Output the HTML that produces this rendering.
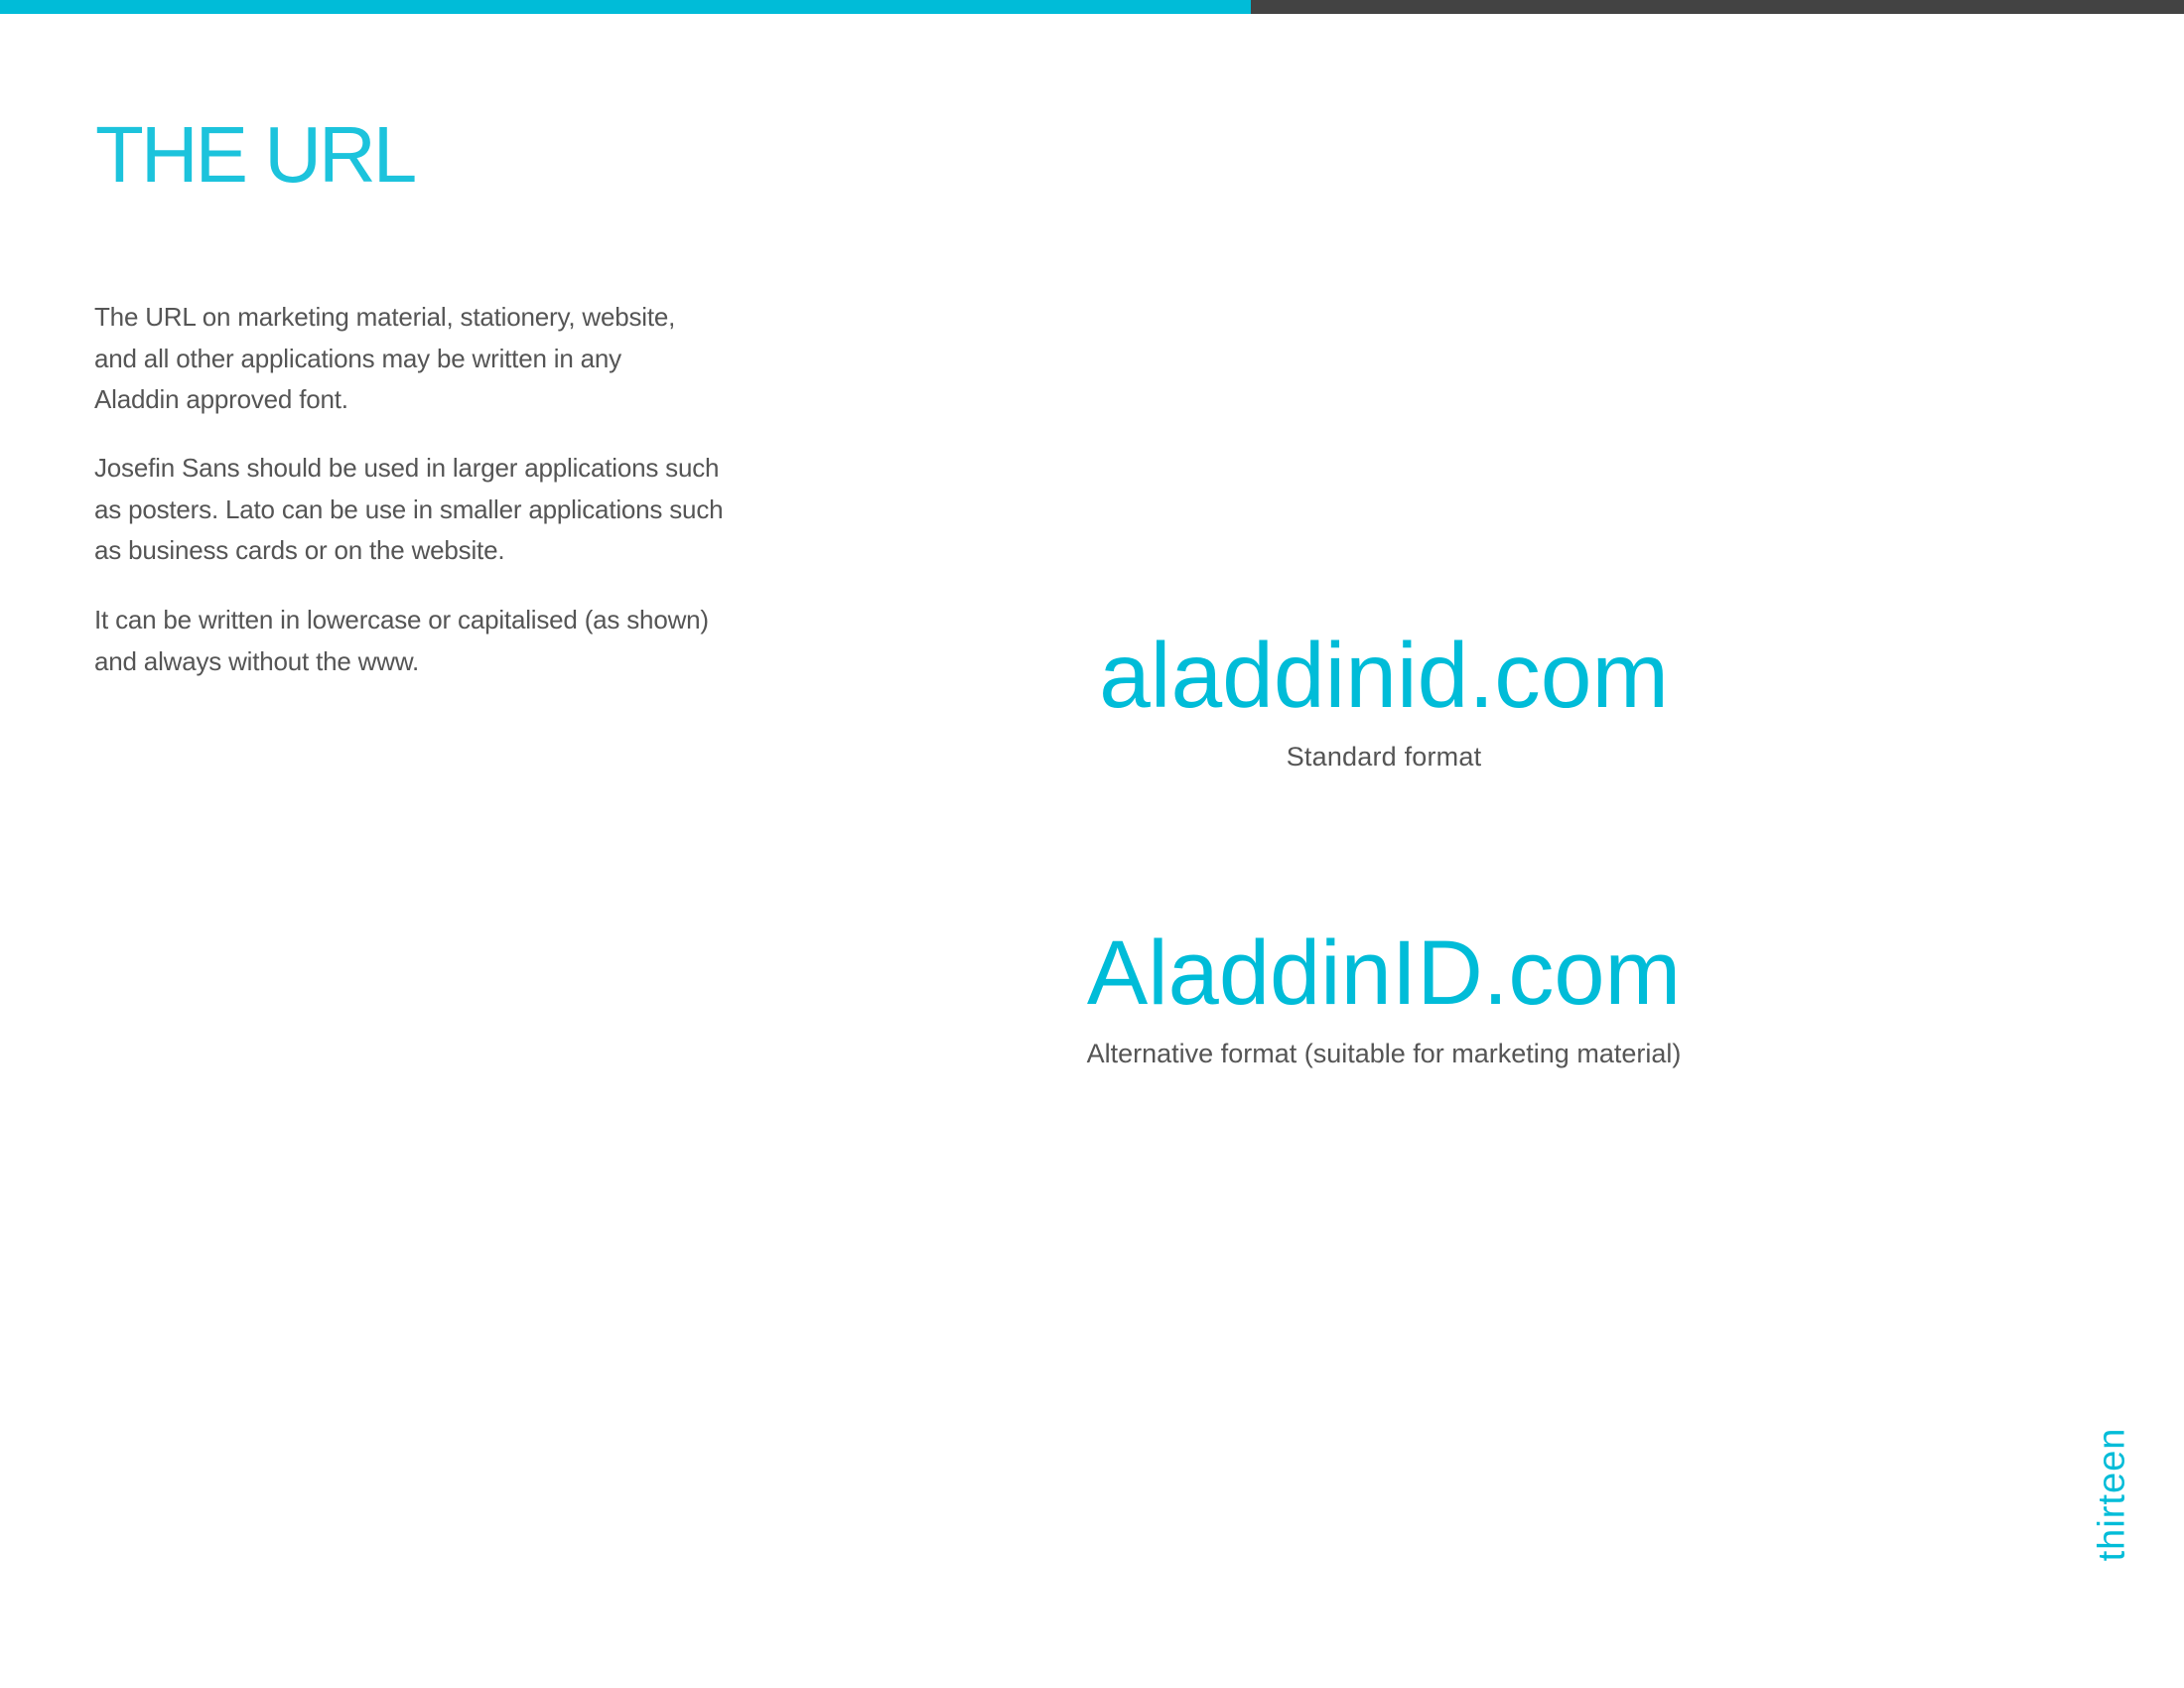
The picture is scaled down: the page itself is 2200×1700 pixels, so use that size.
<!DOCTYPE html>
<html><head><meta charset="utf-8"><style>
html,body{margin:0;padding:0;background:#fff;}
body{width:2200px;height:1700px;position:relative;overflow:hidden;font-family:"Liberation Sans",sans-serif;}
.bar1{position:absolute;left:0;top:0;width:1260px;height:14px;background:#00bcd8;}
.bar2{position:absolute;left:1260px;top:0;width:940px;height:14px;background:#434343;}
.t{position:absolute;left:96px;top:106px;font-size:80px;line-height:100px;color:#1cc3dc;letter-spacing:-3px;font-weight:normal;}
.p{position:absolute;left:95px;width:760px;font-size:26px;line-height:41.5px;color:#555;letter-spacing:-0.2px;margin:0;}
.c{position:absolute;left:0;width:2788px;text-align:center;color:#00bcd8;}
.cap{position:absolute;text-align:center;width:2788px;left:0;font-size:27px;color:#555;letter-spacing:0.2px;}
.num{position:absolute;left:2128px;top:1505px;transform:translate(-50%,-50%) rotate(-90deg);font-size:38px;color:#00bcd8;white-space:nowrap;letter-spacing:1px;}
</style></head><body>
<div class="bar1"></div><div class="bar2"></div>
<div class="t">THE URL</div>
<p class="p" style="top:299px">The URL on marketing material, stationery, website,<br>and all other applications may be written in any<br>Aladdin approved font.</p>
<p class="p" style="top:451px">Josefin Sans should be used in larger applications such<br>as posters. Lato can be use in smaller applications such<br>as business cards or on the website.</p>
<p class="p" style="top:604px">It can be written in lowercase or capitalised (as shown)<br>and always without the www.</p>
<div class="c" style="top:625px;font-size:93px;line-height:110px;">aladdinid.com</div>
<div class="cap" style="top:745px;line-height:34px;">Standard format</div>
<div class="c" style="top:926px;font-size:92px;line-height:108px;">AladdinID.com</div>
<div class="cap" style="top:1044px;line-height:34px;letter-spacing:0px;">Alternative format (suitable for marketing material)</div>
<div class="num">thirteen</div>
</body></html>
